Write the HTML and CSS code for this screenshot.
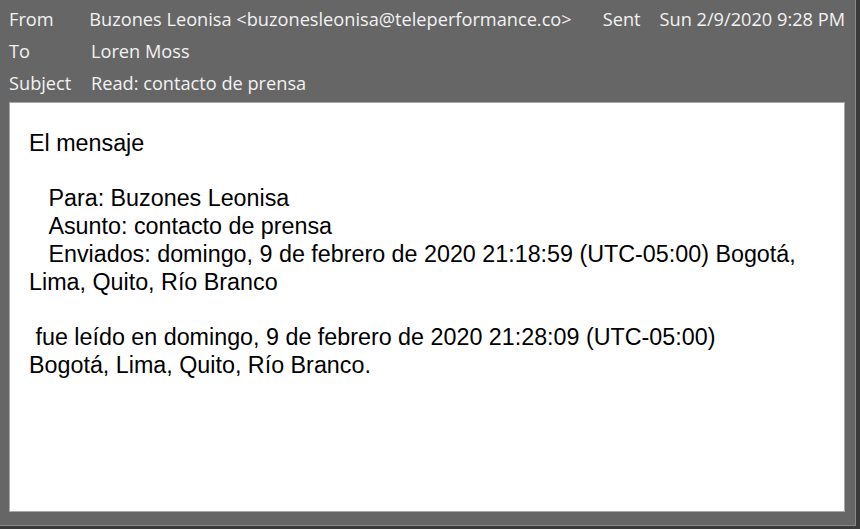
FILE: index.html
```html
<!DOCTYPE html>
<html>
<head>
<meta charset="utf-8">
<link rel="stylesheet" href="styles.css">
</head>
<body>
<div class="window">
  <div class="header">
    <div class="row">
      <span class="label">From</span>
      <span class="value from">Buzones Leonisa &lt;buzonesleonisa@teleperformance.co&gt;</span>
      <span class="label sent">Sent</span>
      <span class="value date">Sun 2/9/2020 9:28 PM</span>
    </div>
    <div class="row">
      <span class="label">To</span>
      <span class="value">Loren Moss</span>
    </div>
    <div class="row">
      <span class="label">Subject</span>
      <span class="value">Read: contacto de prensa</span>
    </div>
  </div>
  <div class="body">
    <p class="line">El mensaje</p>
    <p class="line blank">&nbsp;</p>
    <p class="line">&nbsp;&nbsp;&nbsp;Para: Buzones Leonisa</p>
    <p class="line">&nbsp;&nbsp;&nbsp;Asunto: contacto de prensa</p>
    <p class="line">&nbsp;&nbsp;&nbsp;Enviados: domingo, 9 de febrero de 2020 21:18:59 (UTC-05:00) Bogotá, Lima, Quito, Río Branco</p>
    <p class="line blank">&nbsp;</p>
    <p class="line">&nbsp;fue leído en domingo, 9 de febrero de 2020 21:28:09 (UTC-05:00) Bogotá, Lima, Quito, Río Branco.</p>
  </div>
</div>
</body>
</html>
```
FILE: styles.css
```css
html, body {
  margin: 0;
  padding: 0;
  background: #3a3a3a;
}
.window {
  width: 856px;
  height: 526px;
  background: #666666;
  border-right: 1px solid #8a8a8a;
  border-bottom: 1px solid #8a8a8a;
  display: flex;
  flex-direction: column;
  padding: 3px 10px 13px 9px;
  box-sizing: border-box;
}
.header {
  font-family: "Open Sans", "Noto Sans", sans-serif;
  font-size: 18.2px;
  color: #f2f2f2;
  display: flex;
  flex-direction: column;
}
.row {
  display: flex;
  height: 32px;
  align-items: center;
  white-space: nowrap;
}
.label {
  width: 82px;
}
.sent {
  width: auto;
  margin-left: 31px;
  margin-right: 19px;
}
.body {
  flex: 1;
  background: #ffffff;
  border: 1px solid #a8a8a8;
  margin-top: 3px;
  padding: 27px 47px 0 19px;
  font-family: "Liberation Sans", Arial, sans-serif;
  font-size: 23.3px;
  line-height: 27.7px;
  color: #000;
}
.line {
  margin: 0;
}
```
